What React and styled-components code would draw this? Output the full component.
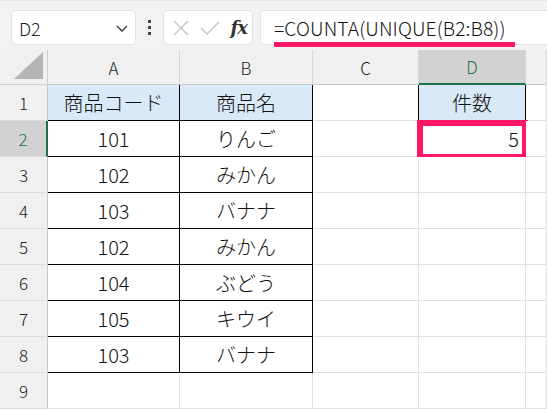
import React from "react";
import styled, { createGlobalStyle } from "styled-components";

const GlobalStyle = createGlobalStyle`
  body {
    margin: 0;
    background: #ffffff;
    overflow: hidden;
    font-family: "Noto Sans CJK JP", "Noto Sans", sans-serif;
  }
`;

const GREEN = "#1e7145";
const RED = "#fe1762";

const rows = [
  ["商品コード", "商品名", "", "件数"],
  ["101", "りんご", "", "5"],
  ["102", "みかん", "", ""],
  ["103", "バナナ", "", ""],
  ["102", "みかん", "", ""],
  ["104", "ぶどう", "", ""],
  ["105", "キウイ", "", ""],
  ["103", "バナナ", "", ""],
  ["", "", "", ""],
];

function App() {
  return (
    <Page>
      <GlobalStyle />
      <Toolbar>
        <NameBox>
          <span>D2</span>
          <svg width="14" height="14" viewBox="0 0 14 14">
            <path d="M2 5 L7 10 L12 5" fill="none" stroke="#333" strokeWidth="1.3" />
          </svg>
        </NameBox>
        <Dots>
          <i />
          <i />
          <i />
        </Dots>
        <FxBox>
          <svg width="18" height="18" viewBox="0 0 18 18">
            <path d="M2 2 L16 16 M16 2 L2 16" stroke="#c4c4c4" strokeWidth="1.4" />
          </svg>
          <svg width="20" height="18" viewBox="0 0 20 18">
            <path d="M1 9 L7 15 L19 3" fill="none" stroke="#c4c4c4" strokeWidth="1.4" />
          </svg>
          <Fx>fx</Fx>
        </FxBox>
        <FormulaBox>
          <FormulaText>=COUNTA(UNIQUE(B2:B8))</FormulaText>
          <Underline />
        </FormulaBox>
      </Toolbar>
      <Sheet>
        <Corner>
          <svg width="30" height="28" viewBox="0 0 30 28">
            <path d="M29 0 L29 27 L0 27 Z" fill="#b5b5b5" />
          </svg>
        </Corner>
        {["A", "B", "C", "D"].map((c) => (
          <ColHead key={c} $active={c === "D"}>
            {c}
          </ColHead>
        ))}
        <ColHead />
        {rows.map((r, i) => (
          <React.Fragment key={i}>
            <RowHead $active={i === 1}>{i + 1}</RowHead>
            <Cell $head={i === 0} $bb={i < 8} $br={i < 8}>
              {r[0]}
            </Cell>
            <Cell $head={i === 0} $bb={i < 8} $br={i < 8}>
              {r[1]}
            </Cell>
            <Cell $br={i === 0} />
            <Cell $head={i === 0} $bb={i === 0} $br={i === 0} $right={i === 1}>
              {r[3]}
              {i === 1 && <Highlight />}
            </Cell>
            <Cell />
          </React.Fragment>
        ))}
      </Sheet>
    </Page>
  );
}

const Page = styled.div`
  width: 547px;
  height: 409px;
  display: flex;
  flex-direction: column;
  overflow: hidden;
`;

const Toolbar = styled.div`
  height: 53px;
  box-sizing: border-box;
  background: #f1f2f4;
  border-top: 1px solid #e4e5e7;
  display: flex;
  align-items: flex-start;
  padding: 9px 0 0 11px;
`;

const BoxBase = styled.div`
  height: 35px;
  box-sizing: border-box;
  background: #fff;
  border: 1px solid #e2e2e2;
  border-radius: 5px;
  display: flex;
  align-items: center;
`;

const NameBox = styled(BoxBase)`
  width: 125px;
  padding: 0 6px 0 7px;
  justify-content: space-between;
  font-family: "Noto Sans CJK JP", "Noto Sans", sans-serif;
  font-weight: 300;
  font-size: 18px;
  color: #222;
`;

const Dots = styled.div`
  width: 27px;
  height: 35px;
  display: flex;
  flex-direction: column;
  align-items: center;
  justify-content: center;
  gap: 3px;
  i {
    width: 3px;
    height: 3px;
    background: #444;
  }
`;

const FxBox = styled(BoxBase)`
  width: 90px;
  padding: 0 5px 0 8px;
  justify-content: space-between;
`;

const Fx = styled.span`
  font-family: "DejaVu Serif", "Liberation Serif", serif;
  font-style: italic;
  font-weight: bold;
  font-size: 18px;
  color: #333;
  letter-spacing: -1px;
`;

const FormulaBox = styled(BoxBase)`
  position: relative;
  flex: 1;
  margin-left: 7px;
  border-right: none;
  border-radius: 5px 0 0 5px;
  padding-left: 13px;
`;

const FormulaText = styled.span`
  font-family: "Noto Sans CJK JP", "Noto Sans", sans-serif;
  font-weight: 300;
  font-size: 19.2px;
  color: #111;
  letter-spacing: 0.1px;
`;

const Underline = styled.span`
  position: absolute;
  left: 13px;
  width: 241px;
  top: 31px;
  height: 5px;
  background: ${RED};
`;

const Sheet = styled.div`
  display: grid;
  grid-template-columns: 48px 132px 133px 106px 107px 1fr;
  grid-template-rows: 35px repeat(9, 36px);
`;

const HeadBase = styled.div`
  box-sizing: border-box;
  background: #f0f0f0;
  display: flex;
  align-items: center;
  justify-content: center;
  font-family: "Noto Sans CJK JP", "Noto Sans", sans-serif;
  font-weight: 300;
  font-size: 17px;
  color: #222;
`;

const Corner = styled(HeadBase)`
  border-right: 1px solid #d0d0d0;
  border-bottom: 1px solid #d0d0d0;
  align-items: flex-end;
  justify-content: flex-end;
  padding: 0 3px 4px 0;
`;

const ColHead = styled(HeadBase)`
  border-right: 1px solid #d6d6d6;
  border-bottom: ${(p) => (p.$active ? `2px solid ${GREEN}` : "1px solid #c8c8c8")};
  background: ${(p) => (p.$active ? "#d2d2d2" : "#f0f0f0")};
  color: ${(p) => (p.$active ? GREEN : "#222")};
`;

const RowHead = styled(HeadBase)`
  border-bottom: 1px solid #dcdcdc;
  border-right: ${(p) => (p.$active ? `2px solid ${GREEN}` : "1px solid #c8c8c8")};
  background: ${(p) => (p.$active ? "#d2d2d2" : "#f0f0f0")};
  color: ${(p) => (p.$active ? GREEN : "#222")};
`;

const Cell = styled.div`
  position: relative;
  box-sizing: border-box;
  display: flex;
  align-items: center;
  justify-content: ${(p) => (p.$right ? "flex-end" : "center")};
  padding-right: ${(p) => (p.$right ? "6px" : "0")};
  background: ${(p) => (p.$head ? "#dae9f8" : "#fff")};
  border-right: 1px solid ${(p) => (p.$br ? "#000" : "#e1e1e1")};
  border-bottom: 1px solid ${(p) => (p.$bb ? "#000" : "#e1e1e1")};
  font-family: "Noto Sans CJK JP", "Noto Sans", sans-serif;
  font-weight: 300;
  font-size: 20px;
  color: #111;
  white-space: nowrap;
`;

const Highlight = styled.span`
  position: absolute;
  top: -1px;
  left: -2px;
  right: -3px;
  bottom: -4px;
  border: 6px solid ${RED};
  pointer-events: none;
`;

export default App;
